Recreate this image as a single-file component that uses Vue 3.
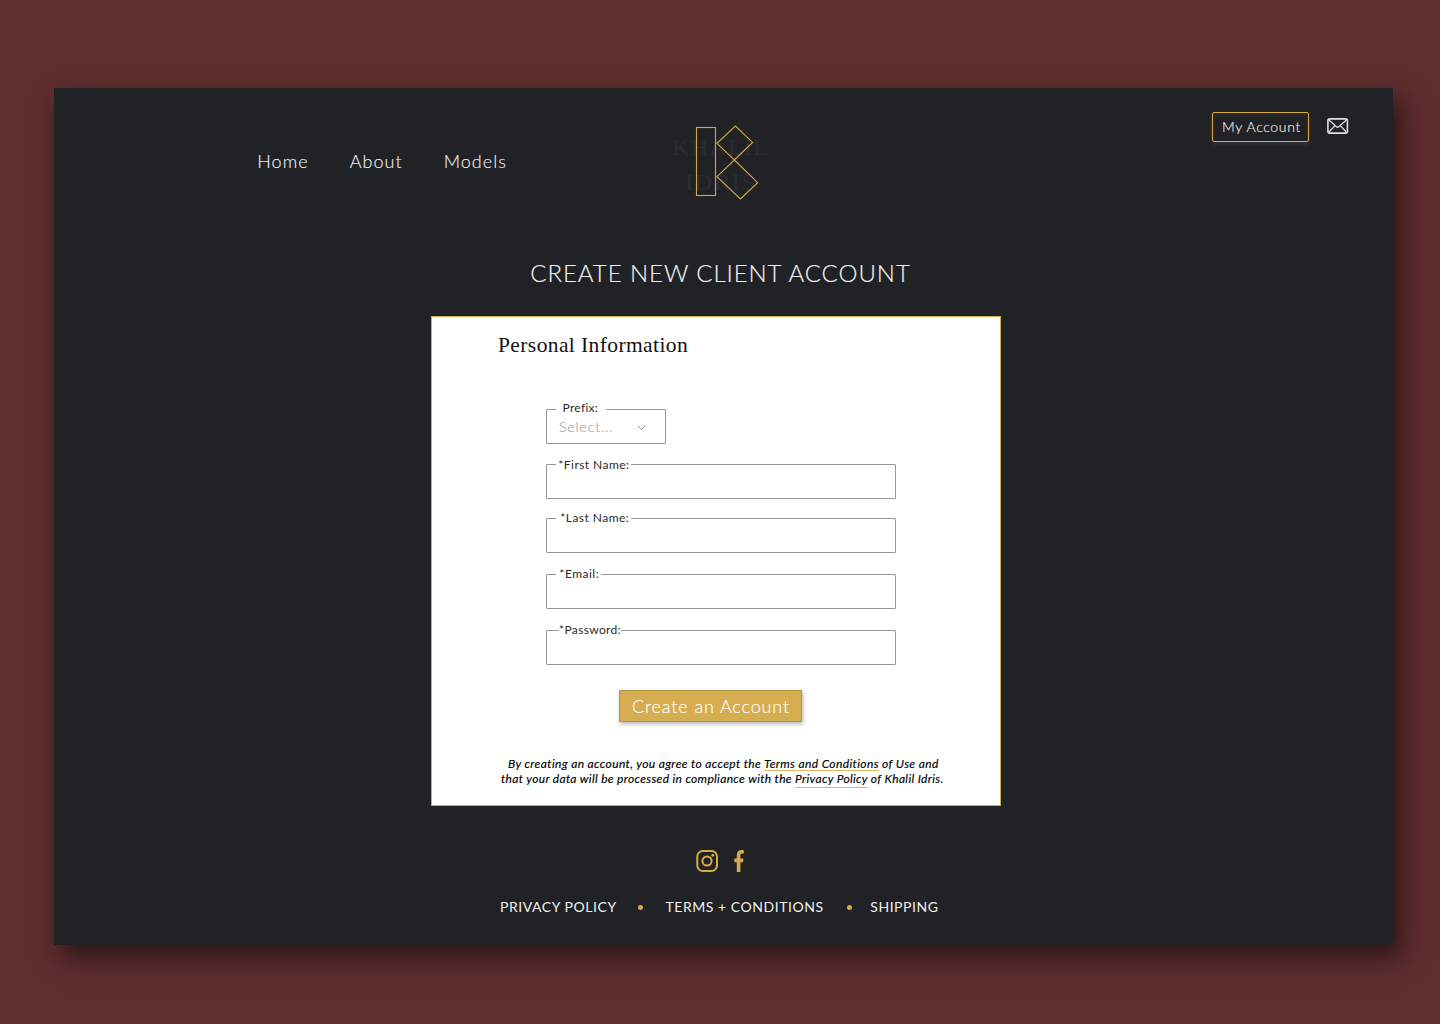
<script setup>
const navItems = ['Home', 'About', 'Models']
const fields = [
  { label: '*First Name:', gapLeft: 9, gapWidth: 75, pad: 2.3, lift: 8, spacing: 0.45, before: 20 },
  { label: '*Last Name:', gapLeft: 9, gapWidth: 75, pad: 4.3, lift: 9, spacing: 0.45, before: 19 },
  { label: '*Email:', gapLeft: 9, gapWidth: 45, pad: 3.3, lift: 9, spacing: 0.5, before: 21 },
  { label: '*Password:', gapLeft: 12, gapWidth: 62, pad: 0, lift: 9, spacing: 0.35, before: 21 },
]
</script>

<template>
  <div class="backdrop">
    <main class="page">
      <header class="header">
        <nav class="nav">
          <a v-for="item in navItems" :key="item">{{ item }}</a>
        </nav>
        <svg class="logo" width="100" height="84" viewBox="670 120 100 84">
          <g class="logo-name">
            <text x="672" y="155" textLength="96">KHALIL</text>
            <text x="685" y="190" textLength="70">IDRIS</text>
          </g>
          <g fill="none" stroke="#d6a845" stroke-width="1.1">
            <rect x="696.5" y="127.5" width="19" height="68" />
            <path d="M735.4 126 752.6 142.4 734.3 160 717 143.3Z" />
            <path d="M734.3 160 757.7 182.7 740.4 199 717 176.7Z" />
          </g>
        </svg>
        <div class="actions">
          <a class="account">My Account</a>
          <svg class="mail" width="22" height="16" viewBox="0 0 22 16" fill="none" stroke="#dcdfdf">
            <rect x="0.9" y="0.9" width="19.5" height="14.2" rx="1.8" stroke-width="1.6" />
            <path d="M2 2 9.4 8.8Q10.6 9.7 11.8 8.8L19.3 2M2 14 8 7.6M19.3 14 13.3 7.6" stroke-width="1.3" />
          </svg>
        </div>
      </header>

      <h1 class="title">CREATE NEW CLIENT ACCOUNT</h1>

      <section class="card">
        <h2 class="subtitle">Personal Information</h2>
        <div class="form">
          <div class="field prefix">
            <label class="label">Prefix:</label>
            <span class="placeholder">Select...</span>
            <svg class="chevron" width="9" height="6" viewBox="0 0 9 6" fill="none" stroke="#8c8c8c">
              <path d="M1 1 4.5 4.5 8 1" />
            </svg>
          </div>
          <div v-for="f in fields" :key="f.label" class="field" :style="{ marginTop: f.before + 'px' }">
            <label
              class="label"
              :style="{ left: f.gapLeft + 'px', width: f.gapWidth + 'px', paddingLeft: f.pad + 'px', top: -f.lift + 'px', letterSpacing: f.spacing + 'px' }"
            >{{ f.label }}</label>
          </div>
        </div>
        <button class="submit">Create an Account</button>
        <p class="legal">
          <span class="line first">By creating an account, you agree to accept the <a class="terms">Terms and Conditions</a> of Use and</span>
          <span class="line second">that your data will be processed in compliance with the <a class="privacy">Privacy Policy</a> of Khalil Idris.</span>
        </p>
      </section>

      <footer class="footer">
        <div class="social">
          <svg width="22" height="22" viewBox="0 0 22 22" fill="none" stroke="#d9ab48" stroke-width="2">
            <rect x="1.3" y="1" width="19.7" height="20" rx="5.5" />
            <circle cx="11" cy="11" r="4.6" />
            <circle cx="16.8" cy="5.3" r="1.4" fill="#d9ab48" stroke="none" />
          </svg>
          <svg width="10" height="22" viewBox="0 0 10 22" fill="#d9ab48">
            <path d="M2.8 22V12.3H0.3V8.6H2.8V5.3C2.8 1.7 4.8 0 7.6 0 8.6 0 9.5.1 9.8.2V3.6H8.1C6.8 3.6 6.4 4.3 6.4 5.4V8.6H9.5L9 12.3H6.4V22Z" />
          </svg>
        </div>
        <div class="links">
          <a>PRIVACY POLICY</a>
          <i class="dot dot-one"></i>
          <a>TERMS + CONDITIONS</a>
          <i class="dot dot-two"></i>
          <a>SHIPPING</a>
        </div>
      </footer>
    </main>
  </div>
</template>

<style>
body {
  margin: 0;
  background: #5e2d30;
}
</style>

<style scoped>
* {
  box-sizing: border-box;
}
.backdrop {
  height: 1024px;
  padding: 88px 47px 79px 54px;
  overflow: hidden;
  background: #5e2d30;
  font-family: Lato, "Liberation Sans", sans-serif;
}
.page {
  display: flex;
  flex-direction: column;
  height: 857px;
  background: #212225;
  box-shadow: 8px 12px 24px rgba(0, 0, 0, 0.55);
}
.header {
  display: flex;
  align-items: flex-start;
  height: 170px;
  color: #ededed;
}
.nav {
  display: flex;
  gap: 41px;
  width: 412.8px;
  margin: 62px 0 0 203.2px;
  font-size: 18px;
  font-weight: 300;
  line-height: 22px;
  letter-spacing: 1.05px;
  -webkit-text-stroke: 0.15px;
}
.logo {
  margin-top: 32px;
}
.logo-name {
  fill: #2b2c30;
  font: 24px "Liberation Serif", serif;
}
.actions {
  display: flex;
  align-items: flex-start;
  gap: 18px;
  margin: 24px 0 0 442px;
}
.account {
  width: 97px;
  height: 30px;
  padding-left: 9px;
  border: 1px solid #dba83f;
  border-radius: 2px;
  box-shadow: 0 2px 4px rgba(255, 255, 255, 0.09), inset 0 2px 4px rgba(255, 255, 255, 0.06);
  font-size: 14px;
  font-weight: 300;
  line-height: 27px;
  letter-spacing: 0.65px;
  white-space: nowrap;
  -webkit-text-stroke: 0.15px;
}
.mail {
  margin-top: 6px;
}
.title {
  margin: 0;
  padding-right: 6px;
  color: #f2f2f2;
  font-size: 24px;
  font-weight: 300;
  line-height: 30px;
  letter-spacing: 0.95px;
  text-align: center;
  -webkit-text-stroke: 0.15px;
}
.card {
  display: flex;
  flex-direction: column;
  width: 570px;
  height: 490px;
  margin: 28px 0 0 377px;
  padding-top: 15px;
  border: 1px solid #d9ab48;
  background: #fff;
}
.subtitle {
  margin: 0 0 0 66px;
  color: #111;
  font: 21.5px/26px "Liberation Serif", serif;
  letter-spacing: 0.4px;
}
.form {
  width: 350px;
  margin: 51px 0 0 114px;
}
.field {
  position: relative;
  height: 35px;
  border: 1px solid #979797;
  border-radius: 1px;
}
.prefix {
  display: flex;
  align-items: center;
  width: 120px;
  padding-left: 12px;
}
.label {
  position: absolute;
  top: -10px;
  left: 9px;
  width: 50px;
  padding-left: 6.5px;
  background: #fff;
  color: #2a2a2a;
  font-size: 12px;
  line-height: 15px;
  letter-spacing: 0.3px;
  white-space: nowrap;
}
.placeholder {
  width: 78px;
  color: #a2a2a2;
  font-size: 14px;
  font-weight: 300;
  line-height: 17px;
  letter-spacing: 0.9px;
  -webkit-text-stroke: 0.15px;
}
.chevron {
  margin-top: 3px;
}
.submit {
  width: 183px;
  height: 32px;
  margin: 25px 0 0 187px;
  padding: 0 0 0 1px;
  border: 1px solid #b8963f;
  background: #d6ad50;
  box-shadow: 1px 2px 4px rgba(0, 0, 0, 0.3);
  color: #fff;
  font: 300 18px/30px Lato, sans-serif;
  letter-spacing: 0.87px;
  white-space: nowrap;
  -webkit-text-stroke: 0.15px;
}
.legal {
  margin: 34px 0 0;
  color: #000;
  font-size: 12px;
  font-style: italic;
  font-weight: 400;
  line-height: 15px;
  -webkit-text-stroke: 0.15px;
}
.line {
  display: block;
  white-space: nowrap;
}
.first {
  margin-left: 76px;
  letter-spacing: 0.38px;
}
.second {
  margin-left: 69px;
  letter-spacing: 0.335px;
}
.terms,
.privacy {
  text-decoration: underline 1px #e0b95f;
  text-underline-offset: 2px;
  text-decoration-skip-ink: none;
}
.privacy {
  text-underline-offset: 4px;
}
.footer {
  margin-top: 44px;
}
.social {
  display: flex;
  gap: 16px;
  margin-left: 642px;
}
.links {
  display: flex;
  align-items: center;
  margin: 26px 0 0 446px;
  color: #f0f0f0;
  font-size: 14px;
  line-height: 18px;
  letter-spacing: 0.55px;
  white-space: nowrap;
}
.dot {
  width: 5px;
  height: 5px;
  border-radius: 50%;
  background: #d9ab48;
}
.dot-one {
  margin: 1px 22.5px 0 21.3px;
}
.dot-two {
  margin: 1px 18.3px 0 23.3px;
}
</style>
